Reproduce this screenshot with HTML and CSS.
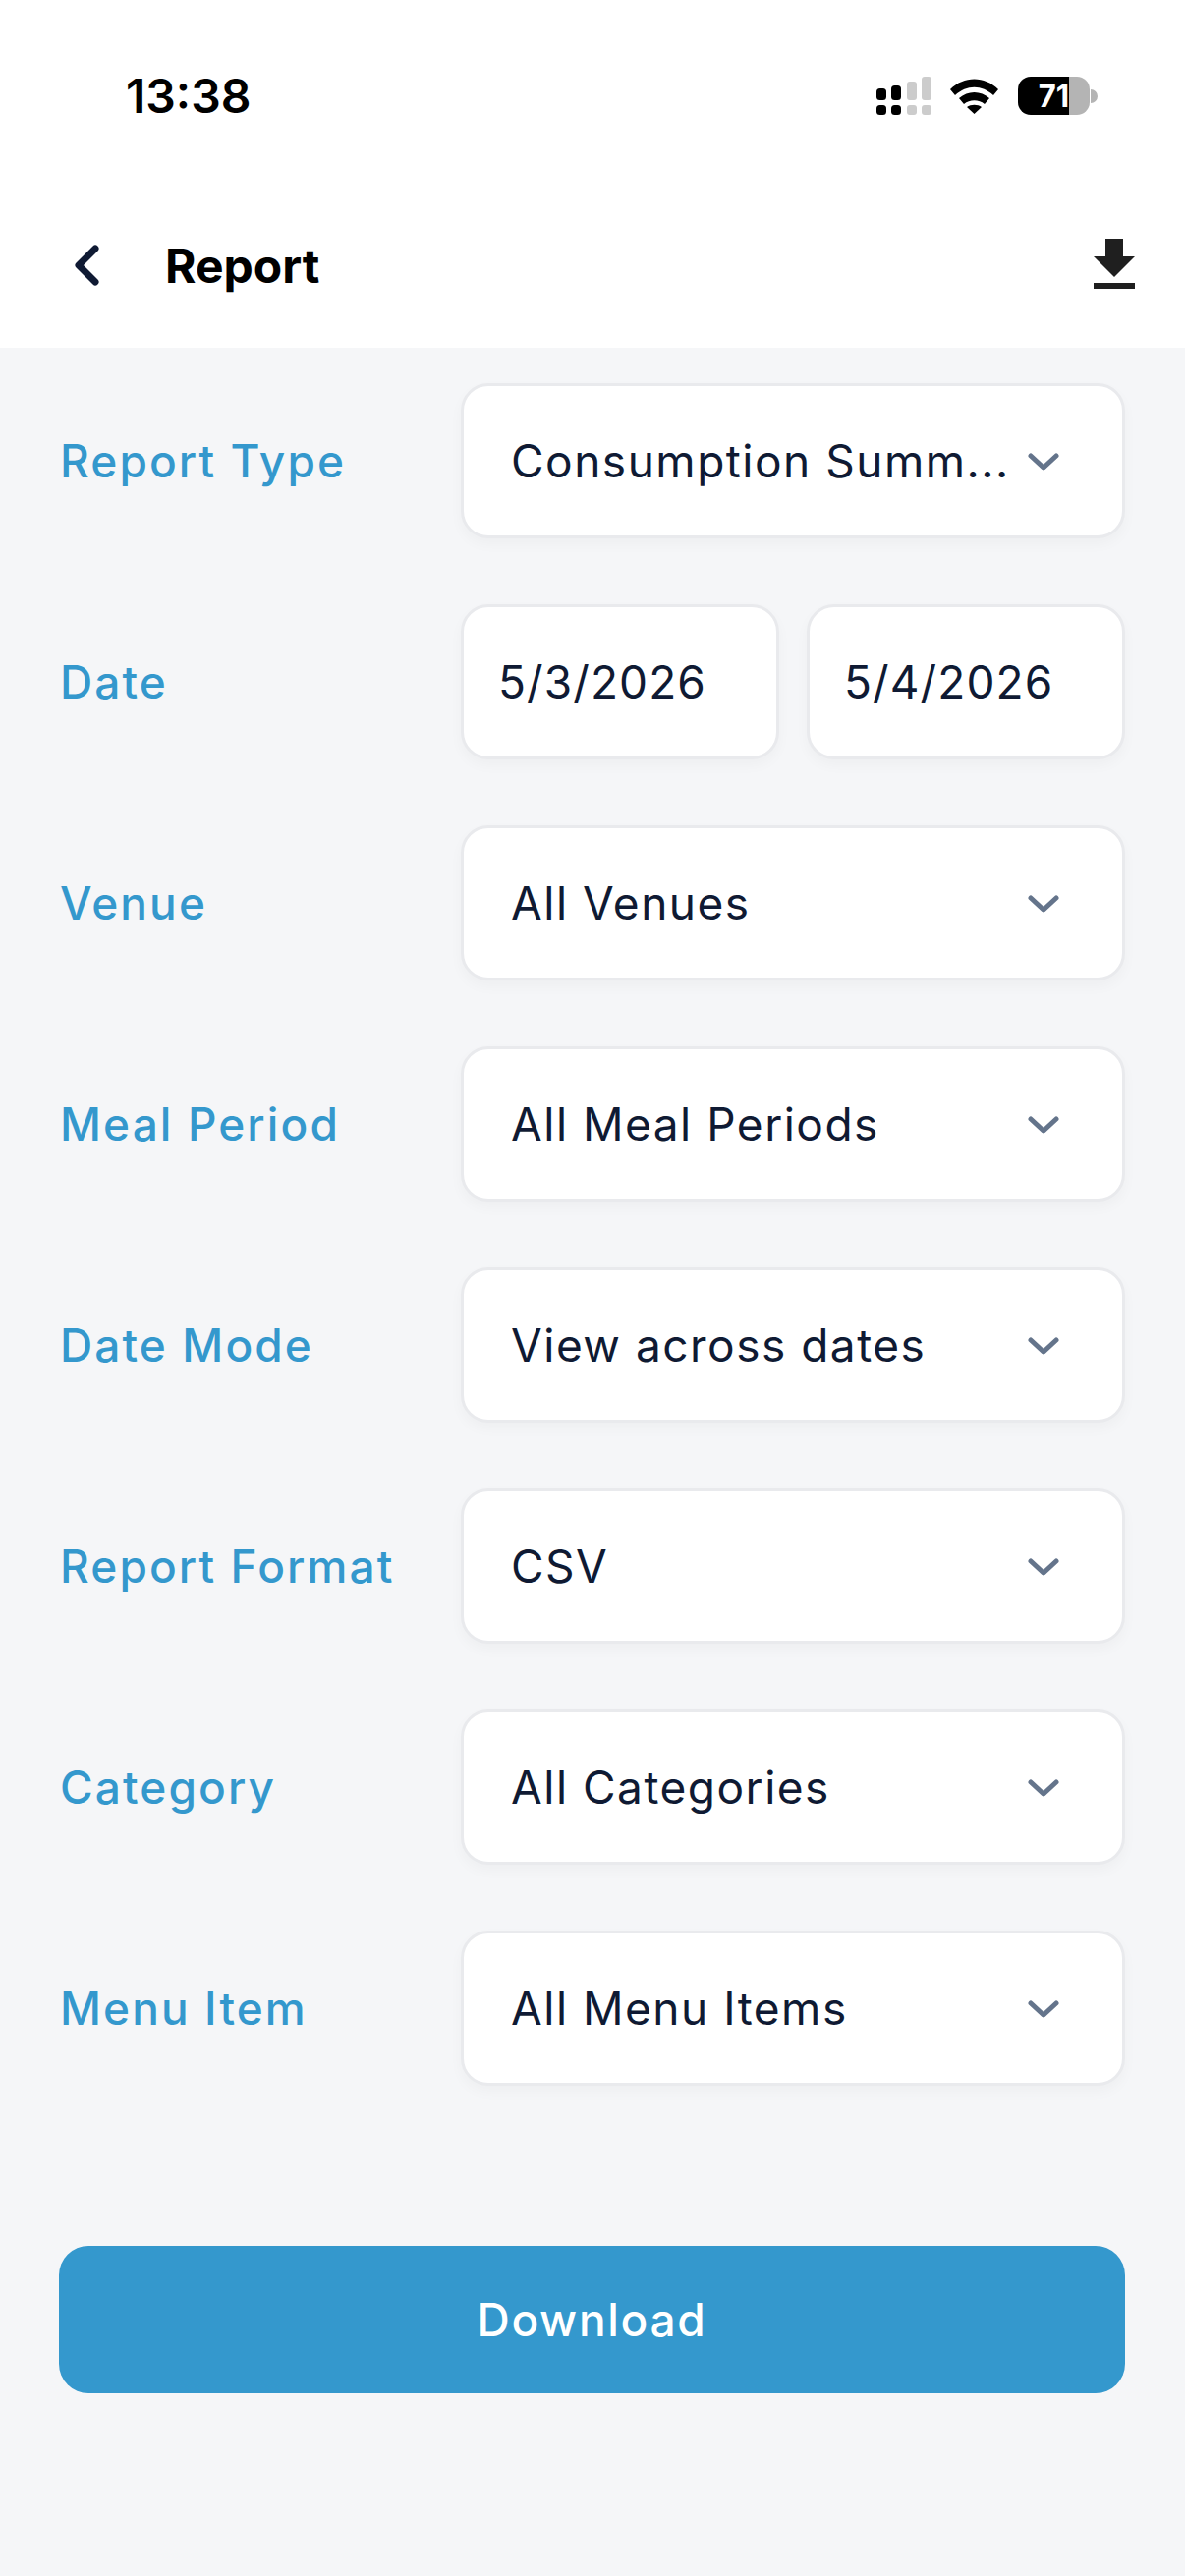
FILE: index.html
```html
<!DOCTYPE html>
<html lang="en">
<head>
  <meta charset="UTF-8">
  <meta name="viewport" content="width=device-width, initial-scale=1.0">
  <title>Report</title>
  <link rel="stylesheet" href="styles.css">
</head>
<body>

  <div class="status-bar">
    <span class="time">13:38</span>
    <div class="status-icons">
      <svg class="signal" width="56" height="39" viewBox="0 0 56 39">
        <rect x="0" y="12" width="10" height="12" rx="3.5" fill="#000"/>
        <rect x="15" y="9" width="10" height="15" rx="3.5" fill="#000"/>
        <rect x="31" y="5" width="10" height="19" rx="3" fill="#ccc"/>
        <rect x="46" y="0" width="10" height="24" rx="3" fill="#ccc"/>
        <rect x="0" y="29" width="10" height="10" rx="3.5" fill="#000"/>
        <rect x="15" y="29" width="10" height="10" rx="3.5" fill="#000"/>
        <rect x="31" y="29" width="10" height="10" rx="3" fill="#ccc"/>
        <rect x="46" y="29" width="10" height="10" rx="3" fill="#ccc"/>
      </svg>
      <svg class="wifi" width="49" height="36" viewBox="0 0 49 36">
        <path d="M0 11C14-3 35-3 49 11l-5 6C32 6 17 6 5 17z" fill="#000"/>
        <path d="M9 20c9-8 22-8 31 0l-5 6c-6-5-15-5-21 0z" fill="#000"/>
        <path d="M17 29c4-3 11-3 15 0l-7.500 7z" fill="#000"/>
      </svg>
      <div class="battery">
        <div class="battery-body">71</div>
        <div class="battery-nub"></div>
      </div>
    </div>
  </div>

  <div class="header">
    <div class="header-left">
      <svg class="back" width="34" height="52" viewBox="0 0 34 52">
        <path d="M26 9 9 26l17 17" fill="none" stroke="#0f1a33" stroke-width="7" stroke-linecap="round" stroke-linejoin="round"/>
      </svg>
      <h1>Report</h1>
    </div>
    <svg class="download-icon" width="72" height="72" viewBox="0 0 24 24">
      <path d="M19 9h-4V3H9v6H5l7 7 7-7zM5 18v2h14v-2H5z" fill="#1f1f1f"/>
    </svg>
  </div>

  <div class="content">
    <div class="form">
      <div class="row">
        <label class="row-label">Report Type</label>
        <div class="select">
          <span class="select-text">Consumption Summ...</span>
          <svg class="chevron" viewBox="0 0 32 20"><path d="M3 5l13 12L29 5" fill="none" stroke="#64748b" stroke-width="5" stroke-linecap="round" stroke-linejoin="round"/></svg>
        </div>
      </div>
      <div class="row">
        <label class="row-label">Date</label>
        <div class="date-pair">
          <div class="date-box">5/3/2026</div>
          <div class="date-box">5/4/2026</div>
        </div>
      </div>
      <div class="row">
        <label class="row-label">Venue</label>
        <div class="select">
          <span class="select-text">All Venues</span>
          <svg class="chevron" viewBox="0 0 32 20"><path d="M3 5l13 12L29 5" fill="none" stroke="#64748b" stroke-width="5" stroke-linecap="round" stroke-linejoin="round"/></svg>
        </div>
      </div>
      <div class="row">
        <label class="row-label">Meal Period</label>
        <div class="select">
          <span class="select-text">All Meal Periods</span>
          <svg class="chevron" viewBox="0 0 32 20"><path d="M3 5l13 12L29 5" fill="none" stroke="#64748b" stroke-width="5" stroke-linecap="round" stroke-linejoin="round"/></svg>
        </div>
      </div>
      <div class="row">
        <label class="row-label">Date Mode</label>
        <div class="select">
          <span class="select-text">View across dates</span>
          <svg class="chevron" viewBox="0 0 32 20"><path d="M3 5l13 12L29 5" fill="none" stroke="#64748b" stroke-width="5" stroke-linecap="round" stroke-linejoin="round"/></svg>
        </div>
      </div>
      <div class="row">
        <label class="row-label">Report Format</label>
        <div class="select">
          <span class="select-text">CSV</span>
          <svg class="chevron" viewBox="0 0 32 20"><path d="M3 5l13 12L29 5" fill="none" stroke="#64748b" stroke-width="5" stroke-linecap="round" stroke-linejoin="round"/></svg>
        </div>
      </div>
      <div class="row">
        <label class="row-label">Category</label>
        <div class="select">
          <span class="select-text">All Categories</span>
          <svg class="chevron" viewBox="0 0 32 20"><path d="M3 5l13 12L29 5" fill="none" stroke="#64748b" stroke-width="5" stroke-linecap="round" stroke-linejoin="round"/></svg>
        </div>
      </div>
      <div class="row">
        <label class="row-label">Menu Item</label>
        <div class="select">
          <span class="select-text">All Menu Items</span>
          <svg class="chevron" viewBox="0 0 32 20"><path d="M3 5l13 12L29 5" fill="none" stroke="#64748b" stroke-width="5" stroke-linecap="round" stroke-linejoin="round"/></svg>
        </div>
      </div>
    </div>
    <button class="download-btn">Download</button>
  </div>

</body>
</html>
```

FILE: styles.css
```css
body {
  font-family: Inter, "Liberation Sans", sans-serif;
  margin: 0;
  padding: 0;
  width: 1206px;
  height: 2622px;
  background-color: #f5f6f8;
  display: flex;
  flex-direction: column;
  overflow: hidden;
}
.status-bar {
  background-color: white;
  height: 186px;
  box-sizing: border-box;
  padding: 78px 89px 0 128px;
  display: flex;
  justify-content: space-between;
  align-items: flex-start;
}
.time {
  font-size: 48px;
  font-weight: 600;
  line-height: 39px;
  color: black;
}
.status-icons {
  display: flex;
  align-items: flex-start;
}
.signal {
  margin-right: 19px;
}
.wifi {
  margin-top: 2px;
  margin-right: 20px;
}
.battery {
  display: flex;
  align-items: center;
}
.battery-body {
  width: 73px;
  height: 39px;
  border-radius: 13px;
  background: linear-gradient(90deg, #000 71%, #b4b4b4 71%);
  color: white;
  font-size: 31px;
  font-weight: 700;
  line-height: 39px;
  text-align: center;
}
.battery-nub {
  width: 7px;
  height: 14px;
  margin-left: 1px;
  border-radius: 0 7px 7px 0;
  background-color: #b4b4b4;
}
.header {
  background-color: white;
  height: 168px;
  box-sizing: border-box;
  padding: 0 36px 0 71px;
  display: flex;
  justify-content: space-between;
  align-items: center;
}
.header-left {
  display: flex;
  align-items: center;
  gap: 63px;
}
.back {
  display: block;
}
.header h1 {
  font-size: 48px;
  font-weight: 700;
  margin: 0;
  color: black;
}
.content {
  flex: 1;
  padding: 36px 61px 0 60px;
}
.form {
  display: flex;
  flex-direction: column;
  gap: 67px;
}
.row {
  display: flex;
  align-items: center;
  height: 158px;
}
.row-label {
  width: 409px;
  padding-left: 1px;
  box-sizing: border-box;
  flex-shrink: 0;
  font-size: 46px;
  letter-spacing: 2.1px;
  font-weight: 500;
  color: #3498cd;
}
.select, .date-box {
  background: white;
  border-radius: 28px;
  border: 3px solid #e9eaed;
  box-shadow: 0 6px 14px rgba(0, 0, 0, 0.03);
  box-sizing: border-box;
  height: 158px;
  font-size: 46px;
  letter-spacing: 1.5px;
  color: #0f1a33;
  display: flex;
  align-items: center;
}
.select {
  flex: 1;
  min-width: 0;
  padding: 0 64px 0 48px;
  gap: 20px;
}
.select-text {
  flex: 1;
  min-width: 0;
  white-space: nowrap;
}
.chevron {
  width: 32px;
  height: 20px;
  flex-shrink: 0;
}
.date-pair {
  flex: 1;
  display: flex;
  gap: 28px;
}
.date-box {
  flex: 1;
  padding-left: 35px;
  letter-spacing: 1.1px;
}
.download-btn {
  display: block;
  width: 100%;
  height: 150px;
  margin-top: 163px;
  background-color: #3498cd;
  color: white;
  border: none;
  border-radius: 30px;
  font-family: inherit;
  font-size: 46px;
  font-weight: 500;
  letter-spacing: 1.7px;
}
```
